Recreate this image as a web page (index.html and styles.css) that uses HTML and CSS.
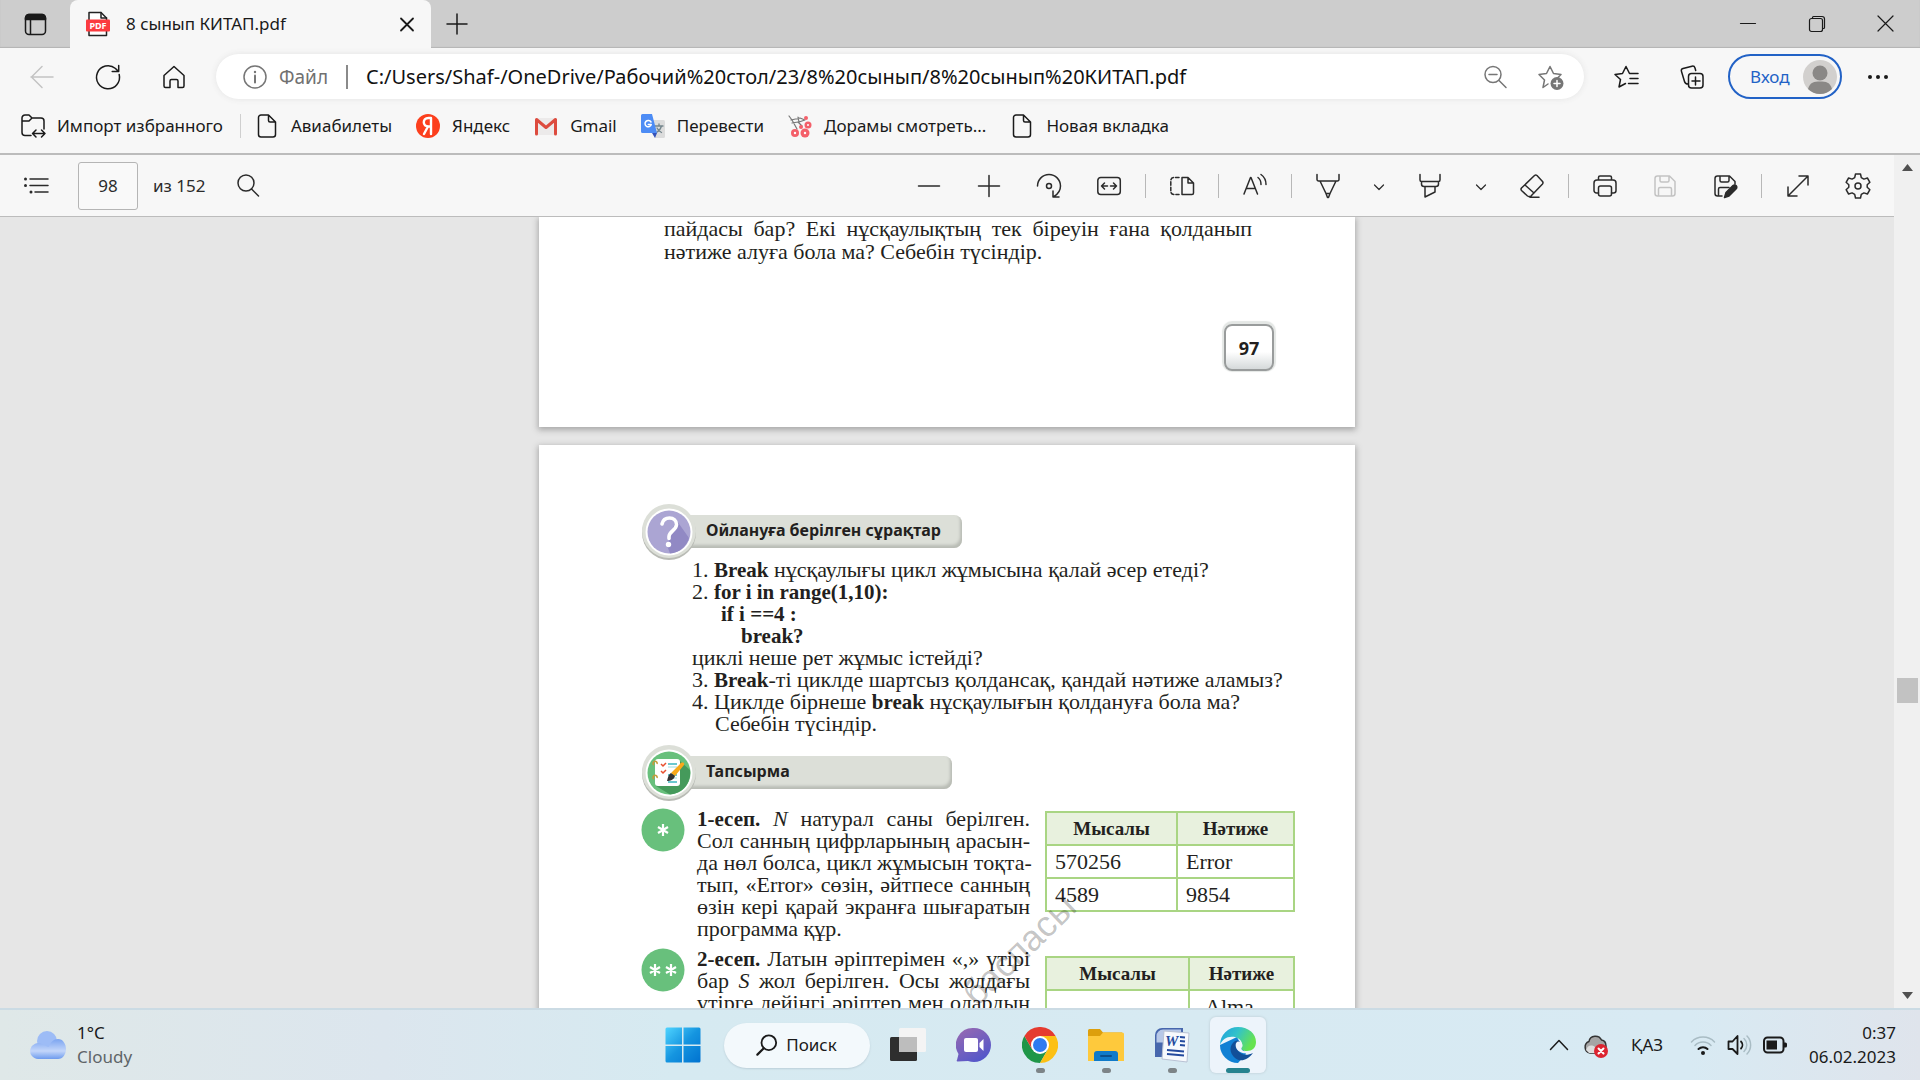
FILE: index.html
```html
<!DOCTYPE html>
<html lang="kk">
<head>
<meta charset="utf-8">
<meta name="viewport" content="width=device-width, initial-scale=1">
<title>8 сынып КИТАП.pdf</title>
<link rel="stylesheet" href="styles.css">
</head>
<body>
<header class="browser">
  <div class="tabstrip">
    <button class="tab-menu" aria-label="Меню вкладок"><svg class="ic" viewBox="0 0 24 24"><rect x="2.500" y="2.500" width="20" height="20" rx="3.500"/><path d="M2.500 7.500V6a3.500 3.500 0 0 1 3.500-3.500h13A3.500 3.500 0 0 1 22.500 6v1.500z" fill="currentColor"/><path d="M7.500 8v14"/></svg></button>
    <div class="tab">
      <svg class="ic" viewBox="0 0 24 24"><path d="M3 .500h12l5.500 5.500v17.500H3z" fill="#fff" stroke="#222"/><path d="M15 .500V6h5.500" stroke="#222"/><rect x="0" y="7.500" width="24" height="12" rx="1" fill="#fb3b3f" stroke="none"/><text x="12" y="17" class="pdf-label">PDF</text></svg>
      <span class="tab-title">8 сынып КИТАП.pdf</span>
      <button class="tab-close" aria-label="Закрыть"><svg class="ic" viewBox="0 0 24 24"><path d="M6 6.500l12 12M18 6.500l-12 12" stroke-width="1.800"/></svg></button>
    </div>
    <button class="tab-new" aria-label="Новая вкладка"><svg class="ic" viewBox="0 0 24 24"><path d="M12 2v20M2 12h20"/></svg></button>
    <div class="window-controls">
      <button aria-label="Свернуть"><svg class="ic thin" viewBox="0 0 24 24"><path d="M4.500 11.500h15"/></svg></button>
      <button aria-label="Восстановить"><svg class="ic thin" viewBox="0 0 24 24"><rect x="4.500" y="6.500" width="13" height="13" rx="2"/><path d="M7.500 6V5.500a1 1 0 0 1 1-1H17a2.500 2.500 0 0 1 2.500 2.500v8.500a1 1 0 0 1-1 1H18"/></svg></button>
      <button aria-label="Закрыть окно"><svg class="ic thin" viewBox="0 0 24 24"><path d="M4 4l15 15M19 4L4 19"/></svg></button>
    </div>
  </div>

  <div class="navbar">
    <button class="nav-btn faded" aria-label="Назад"><svg class="ic" viewBox="0 0 24 24"><path d="M23 12H1M12 1.500L1.500 12 12 22.500"/></svg></button>
    <button class="nav-btn" aria-label="Обновить"><svg class="ic" viewBox="0 0 24 24"><path d="M23.200 9.500A11.500 11.500 0 1 1 19.500 3.500L22.500 6.500M22.700 .500v6h-6.500"/></svg></button>
    <button class="nav-btn" aria-label="Домой"><svg class="ic" viewBox="0 0 24 24"><path d="M2 10.500L12 1.500l10 9V21a1.500 1.500 0 0 1-1.500 1.500H16V16a1.500 1.500 0 0 0-1.500-1.500h-5A1.500 1.500 0 0 0 8 16v6.500H3.500A1.500 1.500 0 0 1 2 21z"/></svg></button>
    <div class="address">
      <svg class="ic grey" viewBox="0 0 24 24"><circle cx="12" cy="12" r="11"/><path d="M12 10.500v7" stroke-width="2"/><circle cx="12" cy="7" r="1.200" fill="currentColor" stroke="none"/></svg>
      <label class="scheme" for="url">Файл</label>
      <input class="url" id="url" type="text" value="C:/Users/Shaf-/OneDrive/Рабочий%20стол/23/8%20сынып/8%20сынып%20КИТАП.pdf">
      <button class="address-btn" aria-label="Масштаб"><svg class="ic grey" viewBox="0 0 24 24"><circle cx="10" cy="9.500" r="8"/><path d="M6 9.500h8M16 15.500l7 7"/></svg></button>
      <button class="address-btn" aria-label="В избранное"><svg class="ic grey" viewBox="0 0 24 24"><path d="M10 19l-5 3.500L6.500 15 1 9.500l7.500-1L12 1.500l3.500 7 7.500 1-3 3"/><circle cx="19" cy="18.500" r="6.500" fill="currentColor" stroke="none"/><path d="M19 15.500v6M16 18.500h6" stroke="#fff"/></svg></button>
    </div>
    <button class="nav-btn fav" aria-label="Избранное"><svg class="ic" viewBox="0 0 24 24"><path d="M11.500 18.500L5 22l1.500-7.500L1 9.500l7.500-1L12 1.500l3.500 7H24M16 13.500h8M14.500 18.500H24"/></svg></button>
    <button class="nav-btn" aria-label="Коллекции"><svg class="ic" viewBox="0 0 24 24"><rect x="8.500" y="8.500" width="14.500" height="14.500" rx="3"/><path d="M15.500 12v8M12 16h8M8 19c-2 0-3-.5-3.500-2.500L1.500 6.500C1 5 1.500 4 3 3.500L12 1.200c1.500-.4 2.500.3 3 1.800l.7 2.500"/></svg></button>
    <button class="signin"><span>Вход</span><svg class="avatar" viewBox="0 0 34 34"><circle cx="17" cy="17" r="17" fill="#d2d0ce"/><circle cx="17" cy="13" r="7.500" fill="#8a8886"/><path d="M5 29c2-7 6-7.500 12-7.500S27 22 29 29a17 17 0 0 1-24 0z" fill="#8a8886"/></svg></button>
    <button class="nav-btn more" aria-label="Ещё"><svg class="ic" viewBox="0 0 24 24"><g fill="currentColor" stroke="none"><circle cx="4" cy="12" r="2"/><circle cx="12" cy="12" r="2"/><circle cx="20" cy="12" r="2"/></g></svg></button>
  </div>

  <div class="bookmarks">
    <button class="bookmark"><svg class="ic" viewBox="0 0 24 24"><path d="M10 21.500H4A3 3 0 0 1 1 18.500V4a3 3 0 0 1 3-3h4l3 3h9a3 3 0 0 1 3 3v8M1 7h7l3-3M12 19.500h12M15 16l-3.500 3.500L15 23M20.500 16l3.500 3.500-3.500 3.500"/></svg>Импорт избранного</button>
    <nav class="bookmark-list">
      <a class="bookmark" href="#"><svg class="ic" viewBox="0 0 24 24"><path d="M13.500 1H6a2.500 2.500 0 0 0-2.500 2.500v17A2.500 2.500 0 0 0 6 23h12a2.500 2.500 0 0 0 2.500-2.500V8zM13.500 1v5.500A1.500 1.500 0 0 0 15 8h5.500"/></svg>Авиабилеты</a>
      <a class="bookmark" href="#"><svg class="ic" viewBox="0 0 24 24"><circle cx="12" cy="12" r="12" fill="#fc3f1d" stroke="none"/><path d="M15 20V4h-2.500C9 4 7.800 6 7.800 8.300c0 2.500 1.700 4.200 4.700 4.200H15M12 12.500L8 20" stroke="#fff" stroke-width="2.400"/></svg>Яндекс</a>
      <a class="bookmark" href="#"><svg class="ic" viewBox="0 0 24 24"><path d="M2 4h20v17H2z" fill="#eceaea" stroke="none"/><path d="M2.500 20V5.500L12 13.500l9.500-8V20" stroke="#dd4b3e" stroke-width="3"/></svg>Gmail</a>
      <a class="bookmark" href="#"><svg class="ic" viewBox="0 0 24 24"><path d="M10 6h12.500A1.500 1.500 0 0 1 24 7.500v15a1.500 1.500 0 0 1-1.500 1.500H14z" fill="#dcdcdc" stroke="none"/><path d="M14 12h8M18 10v2M20.500 12c-.8 3-2.500 5-5 6.500M16 14c1 2 2.500 3.500 4.500 4.500" stroke="#74858c" stroke-width="1.300"/><path d="M11 19h5l-2 5z" fill="#3552b8" stroke="none"/><path d="M1.500 0H11l5 19H1.500A1.500 1.500 0 0 1 0 17.500v-16A1.500 1.500 0 0 1 1.500 0z" fill="#4d8cf5" stroke="none"/><path d="M10 8a3.200 3.200 0 1 0 .3 2.600H7.300" stroke="#fff" stroke-width="1.500"/></svg>Перевести</a>
      <a class="bookmark" href="#"><svg class="ic" viewBox="0 0 24 24"><path d="M1 2l3 4 5 9M3 6l9-2 5 2M4 9l6-1 4 4M10 3l1 5 6-2" stroke="#777" stroke-width="1.200"/><g fill="#f4606a" stroke="none"><circle cx="18" cy="4" r="2"/><circle cx="20" cy="11" r="3.500"/><circle cx="7" cy="19" r="4"/><circle cx="17" cy="19" r="4.500"/><circle cx="13" cy="13" r="2"/></g><g fill="#fff" stroke="none"><circle cx="7" cy="19" r="1.200"/><circle cx="17" cy="19" r="1.200"/><circle cx="20" cy="11" r="1"/></g></svg>Дорамы смотреть...</a>
      <a class="bookmark" href="#"><svg class="ic" viewBox="0 0 24 24"><path d="M13.500 1H6a2.500 2.500 0 0 0-2.500 2.500v17A2.500 2.500 0 0 0 6 23h12a2.500 2.500 0 0 0 2.500-2.500V8zM13.500 1v5.500A1.500 1.500 0 0 0 15 8h5.500"/></svg>Новая вкладка</a>
    </nav>
  </div>
</header>

<main class="reader">
  <section class="reader-main">
    <div class="pdfbar">
      <div class="pdf-left">
        <button aria-label="Содержание"><svg class="ic" viewBox="0 0 24 24"><path d="M6 5h18M6 11.500h18M11 18h13"/><g fill="currentColor" stroke="none"><circle cx="1.500" cy="5" r="1.500"/><circle cx="1.500" cy="11.500" r="1.500"/><circle cx="7" cy="18" r="1.500"/></g></svg></button>
        <input class="page-input" id="page" type="text" value="98">
        <label for="page">из 152</label>
        <button class="find" aria-label="Найти"><svg class="ic" viewBox="0 0 24 24"><circle cx="10" cy="9" r="8"/><path d="M15.500 15l7 7"/></svg></button>
      </div>
      <div class="pdf-tools">
        <button aria-label="Уменьшить"><svg class="ic" viewBox="0 0 24 24"><path d="M1.500 12h21"/></svg></button>
        <button aria-label="Увеличить"><svg class="ic" viewBox="0 0 24 24"><path d="M1.500 12h21M12 1.500v21"/></svg></button>
        <button aria-label="Повернуть"><svg class="ic" viewBox="0 0 24 24"><path d="M.500 12a11.500 11.500 0 0 1 23 0c0 4.500-2.500 8-6.500 10.500M16 17v6h6"/><circle cx="12" cy="12" r="2.500"/></svg></button>
        <button aria-label="По ширине"><svg class="ic" viewBox="0 0 24 24"><rect x=".800" y="3.500" width="22.500" height="17" rx="3"/><path d="M4.500 12h6M7.500 9l-3 3 3 3M19.500 12h-6M16.500 9l3 3-3 3"/></svg></button>
        <span class="rule"></span>
        <button aria-label="Вид страницы"><svg class="ic" viewBox="0 0 24 24"><path d="M18 3.500h-6v17h10a1.500 1.500 0 0 0 1.500-1.500V9zM18 3.500V9h5.500"/><path d="M9 3.500H3.500A3 3 0 0 0 .800 6.500V17.500a3 3 0 0 0 3 3H9" stroke-dasharray="3.500 2"/></svg></button>
        <span class="rule"></span>
        <button aria-label="Прочесть вслух"><svg class="ic" viewBox="0 0 24 24"><path d="M1 20L7.500 3.500h.5L14.500 20M3.500 14.500h8.500M15 3.500c2 1.500 3 3.500 3 7M18 .500c3.500 2.500 5 6 5 10"/></svg></button>
        <span class="rule"></span>
        <button aria-label="Рисование"><svg class="ic" viewBox="0 0 24 24"><path d="M1 .500v5A1.500 1.500 0 0 0 2.500 7h19A1.500 1.500 0 0 0 23 5.500v-5M4 7l6 12.500h4L20 7M10 19.500l1.500 4h1l1.500-4"/></svg></button>
        <button class="narrow" aria-label="Параметры рисования"><svg class="ic sm" viewBox="0 0 12 12"><path d="M1.500 5L6 9.500 10.500 5"/></svg></button>
        <button aria-label="Выделение"><svg class="ic" viewBox="0 0 24 24"><path d="M2 .500V6a1.500 1.500 0 0 0 1.500 1.500h17A1.500 1.500 0 0 0 22 6V.500M3.500 7.500V10A2.500 2.500 0 0 0 6 12.500h12a2.500 2.500 0 0 0 2.500-2.500V7.500M7 12.500v10.500l10-5v-5.500"/></svg></button>
        <button class="narrow" aria-label="Параметры выделения"><svg class="ic sm" viewBox="0 0 12 12"><path d="M1.500 5L6 9.500 10.500 5"/></svg></button>
        <button aria-label="Стереть"><svg class="ic" viewBox="0 0 24 24"><path d="M7.500 22L1.500 16.500a2 2 0 0 1 0-2.500L14.500 1.500a2 2 0 0 1 2.500 0L22.500 7.500a2 2 0 0 1 0 2.500L11 22a3 3 0 0 1-3.500 0zM5 11l9 8M10 23.300h9"/></svg></button>
        <span class="rule"></span>
        <button aria-label="Печать"><svg class="ic" viewBox="0 0 24 24"><path d="M5.500 19H3.500A2.500 2.500 0 0 1 1 16.500V9a3 3 0 0 1 3-3h16a3 3 0 0 1 3 3v7.500a2.500 2.500 0 0 1-2.500 2.500h-2M5.500 6V3.500A1.500 1.500 0 0 1 7 2h10a1.500 1.500 0 0 1 1.500 1.500V6"/><rect x="5.500" y="12" width="13" height="10" rx="2"/></svg></button>
        <button class="faded" aria-label="Сохранить"><svg class="ic" viewBox="0 0 24 24"><path d="M2 4.500A2.500 2.500 0 0 1 4.500 2h12L22 7.500v12a2.500 2.500 0 0 1-2.500 2.500h-15A2.500 2.500 0 0 1 2 19.500zM7 2v4.500A1.500 1.500 0 0 0 8.500 8h6A1.500 1.500 0 0 0 16 6.500V2M5.500 22v-7A1.500 1.500 0 0 1 7 13.500h10a1.500 1.500 0 0 1 1.500 1.500v7"/></svg></button>
        <button aria-label="Сохранить как"><svg class="ic" viewBox="0 0 24 24"><path d="M9 22H4.500A2.500 2.500 0 0 1 2 19.500v-15A2.500 2.500 0 0 1 4.500 2h12L22 7.500V10M7 2v4.500A1.500 1.500 0 0 0 8.500 8h6A1.500 1.500 0 0 0 16 6.500V2M5.500 22v-7A1.500 1.500 0 0 1 7 13.500h9"/><path d="M20 11.500a2.300 2.300 0 0 1 3 3.500l-7 7-4.500 1.500L13 18.500z" fill="currentColor"/></svg></button>
        <span class="rule"></span>
        <button aria-label="Во весь экран"><svg class="ic" viewBox="0 0 24 24"><path d="M2 22L22 2M13 2h9v9M2 13v9h9"/></svg></button>
        <button aria-label="Параметры"><svg class="ic" viewBox="0 0 24 24"><path d="M9.500 0h5l.8 3.600 2.600 1.500 3.500-1.100 2.500 4.300-2.700 2.400v2.600l2.700 2.400-2.500 4.300-3.500-1.100-2.600 1.500-.8 3.600h-5l-.8-3.600-2.600-1.500-3.500 1.100L.100 15.700l2.700-2.400v-2.600L.100 8.300 2.600 4l3.500 1.100 2.600-1.500z"/><circle cx="12" cy="12" r="3"/></svg></button>
      </div>
    </div>

    <div class="viewer">
      <article class="page page-prev">
        <p class="tail justified"><span class="line">пайдасы бар? Екі нұсқаулықтың тек біреуін ғана қолданып</span><span class="line end">нәтиже алуға бола ма? Себебін түсіндір.</span></p>
        <div class="page-number">97</div>
      </article>

      <article class="page page-current">
        <h2 class="heading">
          <svg class="badge" viewBox="0 0 56 56"><circle cx="28" cy="29" r="27" fill="#b9bbb5"/><circle cx="28" cy="27" r="27" fill="#dcdfd8"/><circle cx="28" cy="28" r="23.500" fill="#fff"/><circle cx="28" cy="28" r="21.500" fill="#aba5d3"/><path d="M35 15.500L48 34A21.500 21.500 0 0 1 29 49.500l-3-8 5-14z" fill="#9189c4"/><path d="M21 20c1-4.500 4-6 7.500-6 4 0 7 2.500 7 6.500 0 5.500-7 6.500-7.500 12v2" fill="none" stroke="#fff" stroke-width="3.600" stroke-linecap="round"/><circle cx="27.500" cy="40.500" r="2.700" fill="#fff"/></svg>
          <span class="heading-bar long">Ойлануға берілген сұрақтар</span>
        </h2>
        <div class="questions">
          <p>1. <b>Break</b> нұсқаулығы цикл жұмысына қалай әсер етеді?</p>
          <p>2. <b>for i in range(1,10):</b></p>
          <p class="indent-1"><b>if i ==4 :</b></p>
          <p class="indent-2"><b>break?</b></p>
          <p>циклі неше рет жұмыс істейді?</p>
          <p>3. <b>Break</b>-ті циклде шартсыз қолдансақ, қандай нәтиже аламыз?</p>
          <p>4. Циклде бірнеше <b>break</b> нұсқаулығын қолдануға бола ма?</p>
          <p class="indent-text">Себебін түсіндір.</p>
        </div>

        <h2 class="heading second">
          <svg class="badge" viewBox="0 0 56 56"><circle cx="28" cy="29" r="27" fill="#b9bbb5"/><circle cx="28" cy="27" r="27" fill="#dcdfd8"/><circle cx="28" cy="28" r="23.500" fill="#fff"/><circle cx="28" cy="28" r="21.500" fill="#68c07c"/><path d="M39 16l10 9a21.500 21.500 0 0 1-20 24.500L15 41z" fill="#459a5b"/><rect x="14" y="14" width="25" height="27" rx="3" fill="#fff"/><path d="M27 19h9M27 30h9M27 37h9" stroke="#3bb6c0" stroke-width="1.500"/><path d="M27 22h9M27 33h9" stroke="#9bdce0"/><path d="M20 19l2 2 3-3M20 26l2 2 3-3" fill="none" stroke="#e8502f" stroke-width="1.500"/><path d="M13 20a2 2 0 1 1 3-1M13 34a2 2 0 1 1 3-1" fill="none" stroke="#c79a3a" stroke-width="1.500"/><path d="M39 19c1-2 5-2 4 1L34 31l-4-3z" fill="#f9a91a"/><path d="M30 28l4 3c-1 4-5 5-8 5 1-3 1-6 4-8z" fill="#333"/></svg>
          <span class="heading-bar">Тапсырма</span>
        </h2>

        <div class="task">
          <div class="level"><svg viewBox="0 0 44 44"><circle cx="22" cy="22" r="21.500" fill="#68c07c"/><path d="M22 16v12M17 19l10 6M27 19l-10 6" stroke="#fff" stroke-width="2.200"/></svg></div>
          <p class="justified">
            <span class="line"><b>1-есеп.</b> <i>N</i> натурал саны берілген.</span>
            <span class="line">Сол санның цифрларының арасын-</span>
            <span class="line">да нөл болса, цикл жұмысын тоқта-</span>
            <span class="line">тып, «Error» сөзін, әйтпесе санның</span>
            <span class="line">өзін кері қарай экранға шығаратын</span>
            <span class="line end">программа құр.</span>
          </p>
          <table class="sample">
            <thead><tr><th class="col-a">Мысалы</th><th>Нәтиже</th></tr></thead>
            <tbody><tr><td>570256</td><td>Error</td></tr><tr><td>4589</td><td>9854</td></tr></tbody>
          </table>
        </div>

        <div class="task">
          <div class="level"><svg viewBox="0 0 44 44"><circle cx="22" cy="22" r="21.500" fill="#68c07c"/><path d="M14 16v12M9 19l10 6M19 19L9 25M30 16v12M25 19l10 6M35 19l-10 6" stroke="#fff" stroke-width="2.200"/></svg></div>
          <p class="justified">
            <span class="line"><b>2-есеп.</b> Латын әріптерімен «,» үтірі</span>
            <span class="line">бар <i>S</i> жол берілген. Осы жолдағы</span>
            <span class="line">үтірге дейінгі әріптер мен олардың</span>
          </p>
          <table class="sample wide">
            <thead><tr><th class="col-a">Мысалы</th><th>Нәтиже</th></tr></thead>
            <tbody><tr><td></td><td>Alma</td></tr></tbody>
          </table>
        </div>
        <span class="watermark">баспасы</span>
      </article>
    </div>
  </section>
  <div class="scrollbar">
    <svg viewBox="0 0 25 25"><path d="M12.500 9l5.500 7H7z"/></svg>
    <span class="above"></span><span class="thumb"></span><span class="below"></span>
    <svg viewBox="0 0 25 25"><path d="M12.500 16L18 9H7z"/></svg>
  </div>
</main>

<footer class="taskbar">
  <div class="weather">
    <svg viewBox="0 0 36 30"><defs><linearGradient id="cl" x1="0" y1="0" x2="0" y2="1"><stop offset="0" stop-color="#7ba4f0"/><stop offset=".6" stop-color="#c3d6fa"/><stop offset="1" stop-color="#6e9bee"/></linearGradient></defs><circle cx="17" cy="11" r="10" fill="#9dbcf6"/><path d="M8 29a8 8 0 1 1 4-15c3 1 5 3 7 3 1-5 5-8 9-8 5 0 8 5 8 10s-3 10-8 10z" fill="url(#cl)"/></svg>
    <div><div>1°C</div><div class="muted">Cloudy</div></div>
  </div>
  <div class="apps">
    <button class="app" aria-label="Пуск"><svg viewBox="0 0 36 36"><defs><linearGradient id="wn" x1="0" y1="0" x2="1" y2="1"><stop offset="0" stop-color="#4fd4ff"/><stop offset=".5" stop-color="#1595e0"/><stop offset="1" stop-color="#0072d0"/></linearGradient></defs><path fill="url(#wn)" d="M2 .500h15v17H.500V2A1.500 1.500 0 0 1 2 .500zM18.500.500H34A1.500 1.500 0 0 1 35.500 2v15.500h-17zM.500 19H17v16.500H2A1.500 1.500 0 0 1 .500 34zM18.500 19h17v15a1.500 1.500 0 0 1-1.500 1.500H18.500z"/></svg></button>
    <button class="search"><svg class="ic" viewBox="0 0 24 24"><circle cx="14" cy="9.500" r="8" stroke-width="2"/><path d="M8.500 15.500L1.500 22.500" stroke-width="2.400"/></svg>Поиск</button>
    <button class="app" aria-label="Представление задач"><svg viewBox="0 0 36 36"><rect y="10" width="27" height="24" rx="1.500" fill="#2e2e2e"/><rect x="9" y="1" width="27" height="24" rx="1.500" fill="#f4f4f4"/><path d="M9 10h18v15H9z" fill="#bdbdbd"/></svg></button>
    <button class="app" aria-label="Чат"><svg viewBox="0 0 36 36"><defs><linearGradient id="ch" x1="0" y1="0" x2=".6" y2="1"><stop offset="0" stop-color="#9b6bb0"/><stop offset="1" stop-color="#5557c9"/></linearGradient></defs><path d="M18 1a17 17 0 0 1 0 34c-2 0-4-.4-6-1L1.500 34.500c-1 0-1-1-.5-1.500l1.500-6A17 17 0 0 1 18 1z" fill="url(#ch)"/><rect x="8" y="11" width="14" height="14" rx="2" fill="#fff"/><path d="M23.500 16l4-4v12l-4-4z" fill="#fff"/></svg></button>
    <button class="app open" aria-label="Chrome"><svg viewBox="0 0 36 36"><path d="M2.400 9A18 18 0 0 1 33.600 9H18z" fill="#e53b2f"/><path d="M2.400 9a18 18 0 0 0 15.600 27l7.800-13.500L10.200 22.500z" fill="#1f9648"/><path d="M33.600 9A18 18 0 0 1 18 36l7.800-13.500L18 9z" fill="#fcc014"/><path d="M2.400 9L10.200 22.500 18 9z" fill="#e53b2f"/><circle cx="18" cy="18" r="9" fill="#fff"/><circle cx="18" cy="18" r="7" fill="#2f7bf0"/></svg></button>
    <button class="app open" aria-label="Проводник"><svg viewBox="0 0 36 36"><path d="M0 3.500A1.500 1.500 0 0 1 1.500 2H12l3 3.500h19V12H0z" fill="#dd9f0c"/><path d="M0 9h12l3-3.500h19.500A1.500 1.500 0 0 1 36 7v27H0z" fill="#fec93c"/><path d="M6 34v-7a3 3 0 0 1 3-3h18a3 3 0 0 1 3 3v7z" fill="#0f7ac9"/><path d="M13 29h10" stroke="#0a4f8c" stroke-width="2" stroke-linecap="round"/></svg></button>
    <button class="app open" aria-label="Word"><svg viewBox="0 0 36 36"><path d="M8 1h21v29H1V8a7 7 0 0 1 7-7z" fill="#4767ad"/><path d="M9 2.500h18v13H2.500V9A6.500 6.500 0 0 1 9 2.500z" fill="#b7c8e8"/><path d="M10 4l25 2-2 29L8 32z" fill="#f7f9fd" stroke="#b9c2d4"/><text x="11" y="19" class="word-letter">W</text><path d="M26 10l5 .5M26 14l5 .5M26 18l5 .5M13 23l17 1.500M13 27l17 1.500" stroke="#244a9e" stroke-width="2"/></svg></button>
    <button class="app open active" aria-label="Edge"><svg viewBox="0 0 36 36"><defs><linearGradient id="eg" x1="0" y1="0" x2="1" y2=".4"><stop offset="0" stop-color="#1d9fe0"/><stop offset=".5" stop-color="#33c3c9"/><stop offset="1" stop-color="#66e34f"/></linearGradient></defs><path d="M0 18a18 18 0 0 0 18 18l8-9-9-17z" fill="#1180d4"/><path d="M0 18A18 18 0 0 1 18 0c11 0 18 7 18 15 0 6-4 9-9 9-4 0-6-1.500-5.500-3 2-2 1-9-6.500-11C8 8.500 2 12 0 18z" fill="url(#eg)"/><path d="M15 14c-6 4-6 12 0 17 5 4 12 3 18-5-8 4-15 1-16-6-.3-3 1-5 3-5-1.500-1.500-3-2-5-1z" fill="#124f98"/><path d="M21.500 21c2-2 .5-6.500-3-6.500-4 0-3.500 7 0 9.500 4.500 3.500 10.500 2.500 15 .5-4 1-13 0-12-3.500z" fill="#eef4fb"/></svg></button>
  </div>
  <div class="tray">
    <button aria-label="Скрытые значки"><svg class="ic" viewBox="0 0 24 24"><path d="M3.500 16.500L12 7.500l8.500 9"/></svg></button>
    <button aria-label="OneDrive"><svg class="ic" viewBox="0 0 24 24"><path d="M7 20a6 6 0 0 1-1-11.500C7 2 16 1.500 18.500 7c3 .5 4.500 3 4.500 6v7z" fill="#a5a5a5" stroke="#333"/><path d="M3 17c1-4 5-6 9-3v6H6z" fill="#ddd" stroke="none"/><circle cx="18" cy="18" r="7" fill="#dc2430" stroke="none"/><path d="M15.500 15.500l5 5M20.500 15.500l-5 5" stroke="#fff" stroke-width="2"/></svg></button>
    <button class="lang">ҚАЗ</button>
    <button class="status" aria-label="Сеть, звук, питание">
      <svg class="ic" viewBox="0 0 24 24"><path d="M.500 9a16 16 0 0 1 23 0M4 12.500a11 11 0 0 1 16 0" stroke="#a9bcc4"/><path d="M7.500 16a6.500 6.500 0 0 1 9 0" stroke-width="2"/><circle cx="12" cy="20" r="2" fill="currentColor" stroke="none"/></svg>
      <svg class="ic" viewBox="0 0 24 24"><path d="M10.500 3v18l-5-5H1.500V8.500h4zM14 8.500a5 5 0 0 1 0 7" stroke-width="1.800"/><path d="M17 5.500a9 9 0 0 1 0 13M20 3a13 13 0 0 1 0 18" stroke="#a9bcc4"/></svg>
      <svg class="ic" viewBox="0 0 24 24"><rect x="1" y="4.500" width="19.500" height="15" rx="3.500" stroke-width="2"/><path d="M3.500 7.500h10.500v9H3.500zM21 9.500h1.500a1.500 1.500 0 0 1 1.500 1.500v2a1.500 1.500 0 0 1-1.500 1.500H21z" fill="currentColor" stroke="none"/></svg>
    </button>
    <div class="clock"><div>0:37</div><div>06.02.2023</div></div>
  </div>
</footer>
</body>
</html>
```
FILE: styles.css
```css
* { box-sizing: border-box; }

body {
  margin: 0;
  height: 100vh;
  overflow: hidden;
  display: flex;
  flex-direction: column;
  font-family: "Noto Sans", "Open Sans", sans-serif;
  font-size: 17px;
  line-height: 24px;
  color: #1a1a1a;
  background: #e6e6e6;
}

p, h2 { margin: 0; }

button {
  border: 0;
  padding: 0;
  background: none;
  font: inherit;
  color: inherit;
  display: flex;
  align-items: center;
  justify-content: center;
}

.ic {
  width: 24px;
  height: 24px;
  flex: none;
  overflow: visible;
  fill: none;
  stroke: currentColor;
  stroke-width: 1.5;
  stroke-linecap: round;
  stroke-linejoin: round;
}
.ic.sm { width: 12px; height: 12px; stroke-width: 1.2; }
.ic.thin { stroke-width: 1.2; }
.grey { color: #767676; }
.pdf-tools .faded, .faded { color: #c3c3c3; }

/* Tab strip */
.browser { background: #f7f7f7; border-bottom: 2px solid #bcbcbc; }
.tabstrip {
  display: flex;
  height: 48px;
  background: #cdcdcd;
  box-shadow: inset 0 -1px 1px #b4b4b4;
}
.tab-menu { width: 70px; }
.tab {
  width: 361px;
  padding: 0 12px 0 16px;
  display: flex;
  align-items: center;
  gap: 16px;
  background: #f7f7f7;
  border-radius: 8px 8px 0 0;
}
.tab-title { flex: 1; white-space: nowrap; }
.tab-new { width: 52px; }
.pdf-label {
  font: bold 9px "Noto Sans", sans-serif;
  fill: #fff;
  stroke: none;
  text-anchor: middle;
}
.word-letter {
  font: italic bold 15px "Liberation Serif", serif;
  fill: #244a9e;
}
.window-controls { margin-left: auto; display: flex; }
.window-controls button { width: 69px; }

/* Address row */
.navbar { display: flex; align-items: center; padding: 6px 9px 0; height: 51px; }
.nav-btn { width: 66px; height: 45px; }
.address {
  flex: 1;
  height: 45px;
  margin: 0 9px;
  padding: 0 1px 0 27px;
  display: flex;
  align-items: center;
  background: #fff;
  border-radius: 23px;
  box-shadow: 0 0 6px #e4e4e4;
}
.scheme {
  margin-left: 12px;
  padding-right: 18px;
  border-right: 2px solid #8a8a8a;
  font-size: 19px;
  color: #717171;
}
.url {
  flex: 1;
  min-width: 0;
  margin-left: 18px;
  padding: 0;
  border: 0;
  background: none;
  font: inherit;
  font-size: 20px;
  line-height: 28px;
  color: #111;
}
.address-btn { width: 55px; height: 45px; }
.address-btn:last-child { margin-right: 6px; }
.signin {
  width: 114px;
  height: 45px;
  margin: 0 3px;
  padding: 0 3px 0 20px;
  justify-content: space-between;
  border: 2px solid #2262c6;
  border-radius: 23px;
  color: #2262c6;
}
.avatar { width: 34px; height: 34px; }

/* Favourites */
.bookmarks { display: flex; align-items: center; height: 54px; padding: 0 21px; }
.bookmark {
  display: flex;
  align-items: center;
  gap: 12px;
  color: #1a1a1a;
  text-decoration: none;
  white-space: nowrap;
}
.bookmark-list {
  display: flex;
  gap: 24px;
  margin-left: 17px;
  padding-left: 14px;
  border-left: 1px solid #cfcfcf;
}

/* PDF reader */
.reader { flex: 1; min-height: 0; display: flex; }
.reader-main { flex: 1; min-width: 0; display: flex; flex-direction: column; }
.pdfbar {
  flex: none;
  height: 62px;
  display: flex;
  align-items: center;
  justify-content: space-between;
  padding: 0 6px;
  background: #f7f7f7;
  border-bottom: 1px solid #bcbcbc;
  color: #2b2b2b;
}
.pdf-left, .pdf-tools { display: flex; align-items: center; }
.pdf-left button, .pdf-tools button { width: 60px; height: 48px; }
.pdf-left .find { margin-left: 13px; }
.pdf-tools .narrow { width: 42px; }
.page-input {
  width: 60px;
  height: 48px;
  margin: 0 15px 0 12px;
  padding: 0;
  border: 1px solid #b5b5b5;
  border-radius: 3px;
  background: #f9f9f9;
  font: inherit;
  color: inherit;
  text-align: center;
}
.rule { width: 1px; height: 24px; margin: 0 6px; background: #b8b8b8; }

.viewer {
  flex: 1;
  min-height: 0;
  overflow: hidden;
  display: flex;
  flex-direction: column;
  align-items: center;
  gap: 18px;
  background: #e6e6e6;
}
.page {
  position: relative;
  flex: none;
  width: 100%;
  max-width: 816px;
  background: #fff;
  box-shadow: 0 2px 6px 1px #a8a8a8;
  font-family: "Liberation Serif", serif;
  font-size: 22px;
  line-height: 22px;
  color: #231f20;
}
.page b { font-size: 21px; }
.page-prev { padding: 0 81px 56px 125px; }
.page-current { padding: 59px 60px 40px 102px; }
.tail { width: 588px; line-height: 23px; }
.justified .line { display: block; white-space: nowrap; text-align: justify; text-align-last: justify; }
.justified .end { text-align-last: left; }
.page-number {
  width: 50px;
  height: 47px;
  margin: 61px 0 0 auto;
  display: flex;
  align-items: center;
  justify-content: center;
  border: 2px solid #999c9c;
  border-radius: 8px;
  background: linear-gradient(#fff 60%, #d5d9da);
  box-shadow: 0 -1px 1px 2px #e4e7e5;
  font: bold 18px "Noto Sans", sans-serif;
}

.heading { display: flex; align-items: center; height: 55px; }
.heading.second { margin-top: 10px; }
.badge { width: 56px; height: 56px; z-index: 1; }
.heading-bar {
  width: 265px;
  height: 33px;
  margin-left: -10px;
  padding-left: 19px;
  border-radius: 0 8px 8px 0;
  background: #dcdfd8;
  box-shadow: inset -2px -3px 3px #b9bcb5;
  font: bold 16px/31px "Noto Sans", sans-serif;
}
.heading-bar.long { width: 275px; }

.questions { padding-left: 51px; white-space: nowrap; }
.indent-1 { padding-left: 29px; }
.indent-2 { padding-left: 49px; }
.indent-text { padding-left: 23px; }

.task {
  display: grid;
  grid-template-columns: 56px minmax(0, 1fr) 250px;
  margin-top: 8px;
  align-items: start;
}
.task .justified { padding-right: 15px; }
.level svg { display: block; width: 44px; height: 44px; }
.sample {
  margin-top: 3px;
  width: 250px;
  border-collapse: collapse;
  table-layout: fixed;
}
.sample th, .sample td { height: 33px; padding: 0 8px; border: 2px solid #a9d583; }
.sample td { text-align: left; }
.sample th { background: #e8f1de; font-size: 19px; }
.sample .col-a { width: 131px; }
.sample.wide { margin-top: 8px; }
.sample.wide .col-a { width: 143px; }
.sample.wide td { padding-left: 15px; }

.watermark {
  position: absolute;
  left: 442px;
  top: 531px;
  font: 36px/36px "Liberation Sans", sans-serif;
  color: rgba(0, 0, 0, 0.24);
  transform: rotate(-44deg);
  transform-origin: left bottom;
}

.scrollbar {
  width: 26px;
  display: flex;
  flex-direction: column;
  align-items: center;
  background: #f0f0f0;
}
.scrollbar svg { width: 25px; height: 25px; fill: #505050; }
.scrollbar .above { flex: 16; }
.scrollbar .below { flex: 9; }
.scrollbar .thumb { width: 21px; height: 25px; background: #c2c2c2; }

/* Taskbar */
.taskbar {
  flex: none;
  height: 72px;
  display: grid;
  grid-template-columns: 1fr auto 1fr;
  align-items: center;
  padding: 0 24px;
  background: linear-gradient(90deg, #dfe8e8, #dce6ee 20%, #d6eaf1 35%, #d8eaf3 88%, #dfe4ec);
  border-top: 2px solid #cbdbe4;
}
.weather { display: flex; align-items: center; gap: 11px; padding-left: 6px; }
.weather svg { width: 36px; height: 30px; }
.muted { color: #5f6568; }
.apps { display: flex; align-items: center; }
.app { position: relative; width: 66px; height: 56px; }
.app svg { width: 36px; height: 36px; }
.open::after {
  content: "";
  position: absolute;
  left: 50%;
  bottom: 0;
  width: 9px;
  height: 5px;
  margin-left: -4px;
  border-radius: 3px;
  background: #7d8487;
}
.app.active {
  width: 56px;
  margin: 0 5px;
  border-radius: 6px;
  background: #edf4fb;
  box-shadow: 0 0 2px 1px #c9dae2;
}
.active::after { width: 24px; margin-left: -12px; background: #26838f; }
.search {
  width: 146px;
  height: 45px;
  margin: 0 5px 0 8px;
  gap: 8px;
  border-radius: 23px;
  background: #f3f9fc;
  box-shadow: 0 1px 2px #bccfd8;
}
.search .ic { width: 22px; height: 22px; }
.tray { display: flex; align-items: center; justify-content: flex-end; }
.tray > button { height: 48px; }
.tray > button:first-child { margin-right: 12px; }
.tray .lang { margin: 0 28px 0 24px; }
.tray .status { gap: 12px; }
.clock { margin-left: 22px; text-align: right; }
```
